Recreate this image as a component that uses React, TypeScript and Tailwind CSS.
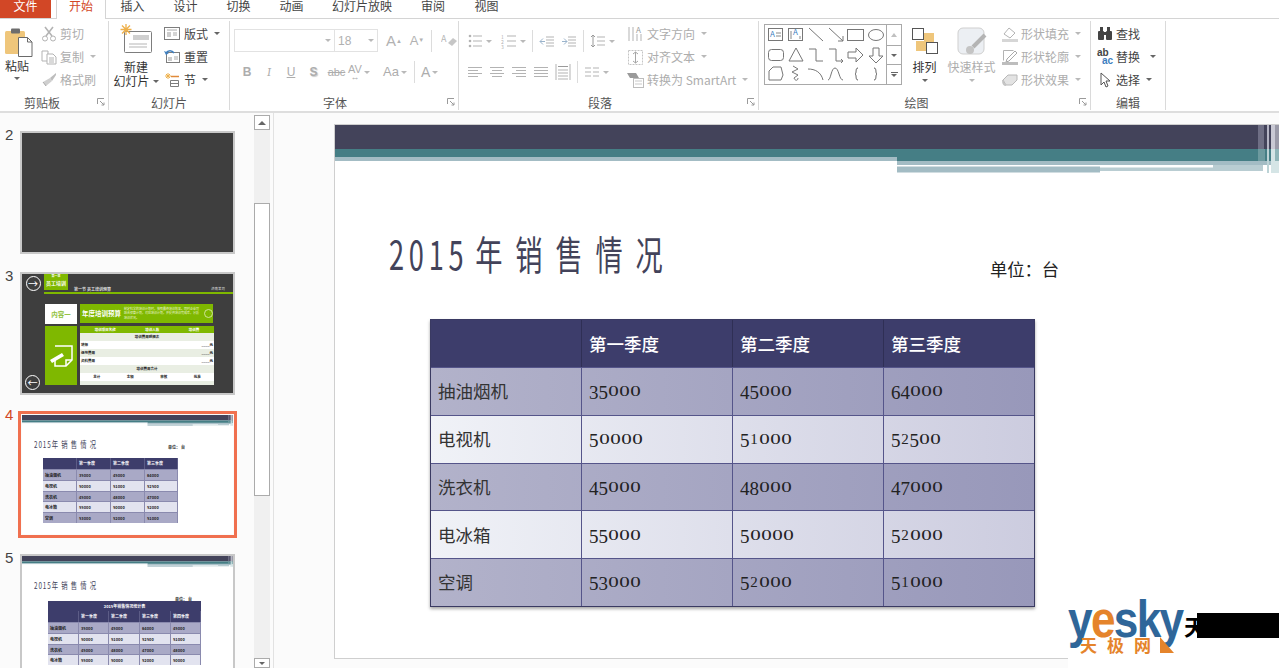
import React from 'react';

const cjk = { fontFamily: '"Noto Sans CJK SC", "Noto Sans", sans-serif' };

const Caret = ({ light = false }: { light?: boolean }) => (
  <span className={`inline-block w-0 h-0 border-x-[3px] border-t-[3px] border-x-transparent ${light ? 'border-t-[#b9b9b9]' : 'border-t-[#666]'}`} />
);

const Ico = ({ w = 16, h = 16, children }: { w?: number; h?: number; children: React.ReactNode }) => (
  <svg width={w} height={h} viewBox={`0 0 ${w} ${h}`} fill="none" strokeWidth="1" className="shrink-0">
    {children}
  </svg>
);

const Tile = ({ x = 0, children }: { x?: number; children?: React.ReactNode }) => (
  <div className="w-[22px] h-[20px] flex items-center justify-center" style={x ? { marginLeft: x } : undefined}>
    {children}
  </div>
);

const Sep = () => <div className="w-px h-[22px] bg-[#dcdcdc] mx-[3px]" />;

const SmallBtn = ({ icon, label, off, caret, className = '' }: { icon: React.ReactNode; label: string; off?: boolean; caret?: boolean; className?: string }) => (
  <div className={`h-[23px] flex items-center gap-[3px] text-[12px] whitespace-nowrap ${off ? 'text-[#adadad]' : 'text-[#444]'} ${className}`}>
    {icon}
    <span>{label}</span>
    {caret && <span className="ml-[3px] flex"><Caret light={off} /></span>}
  </div>
);

const Launcher = () => (
  <svg width="8" height="8" viewBox="0 0 8 8" className="absolute right-[3px] bottom-[4px]" fill="none" stroke="#9a9a9a">
    <path d="M0.5 6V0.5H7" />
    <path d="M3 3L7 7M7 4.5V7H4.5" />
  </svg>
);

const Group = ({ w, label, launcher, labelClass = '', children }: { w: number; label: string; launcher?: boolean; labelClass?: string; children: React.ReactNode }) => (
  <div className="relative h-[89px] mt-[2px] flex flex-col border-r border-[#dadada] shrink-0" style={{ width: w }}>
    <div className="flex-1 flex min-h-0">{children}</div>
    <div className={`h-[14px] leading-[14px] text-center text-[12px] text-[#555] ${labelClass}`}>{label}</div>
    {launcher && <Launcher />}
  </div>
);

const tabs = [
  ['插入', 'w-[53px]'],
  ['设计', 'w-[53px]'],
  ['切换', 'w-[53px]'],
  ['动画', 'w-[53px]'],
  ['幻灯片放映', 'w-[88px]'],
  ['审阅', 'w-[54px]'],
  ['视图', 'w-[53px]'],
];

function TabBar() {
  return (
    <div className="h-[19px] flex border-b border-[#d4d4d4] text-[12px] leading-[11px]">
      <div className="w-[51px] h-[18px] bg-[#d24726] text-white text-center overflow-hidden">文件</div>
      <div className="ml-[5px] w-[50px] h-[19px] bg-white border-x border-[#d4d4d4] text-[#d24726] text-center">开始</div>
      {tabs.map(([t, c]) => (
        <div key={t} className={`${c} text-[#444] text-center`}>{t}</div>
      ))}
    </div>
  );
}

function Clipboard() {
  return (
    <Group w={109} label="剪贴板" launcher labelClass="pr-[24px]">
      <div className="w-[38px] pl-[5px] pt-[7px] flex flex-col items-start">
        <Ico w={29} h={29}>
          <rect x="0" y="3" width="20" height="23" rx="1.5" fill="#efc67b" />
          <rect x="6" y="0.5" width="9" height="5" rx="1" fill="#6d6d6d" />
          <path d="M13.5 9.5h9l4.5 4.5v14.5h-13.5z" fill="#fff" stroke="#6a6a6a" />
          <path d="M22.5 9.5v4.5h4.5" stroke="#6a6a6a" />
        </Ico>
        <div className="mt-[1px] text-[12px] leading-[16px] text-[#333]">粘贴</div>
        <div className="mt-[3px] ml-[9px] flex"><Caret /></div>
      </div>
      <div className="pl-[3px] pt-[1px]">
        <SmallBtn off label="剪切" icon={<Ico><g stroke="#b3b3b3"><path d="M4 1l7 9M12 1l-7 9" strokeWidth="1.6" /><circle cx="4" cy="12.5" r="2.5" /><circle cx="12" cy="12.5" r="2.5" /></g></Ico>} />
        <SmallBtn off caret label="复制" icon={<Ico><g stroke="#b3b3b3"><path d="M1 2h6v10H1z" /><path d="M6 5h6l3 3v7H6z" fill="#fff" /><path d="M8 9h5M8 11h5M8 13h5" /></g></Ico>} />
        <SmallBtn off label="格式刷" icon={<Ico><path d="M15 1l-6 5 2 3 4-6z" fill="#bdbdbd" /><path d="M9 6l-7 4 3 4 6-5z" fill="#cfcfcf" /><path d="M2 10l3 4" stroke="#aaa" /></Ico>} />
      </div>
    </Group>
  );
}

function Slides() {
  return (
    <Group w={121} label="幻灯片">
      <div className="w-[54px] flex flex-col items-center pt-[3px]">
        <div className="ml-[3px] self-start pl-[8px]">
          <Ico w={34} h={30}>
            <rect x="4.5" y="7.5" width="27" height="21" rx="1" fill="#fff" stroke="#7d7d7d" />
            <rect x="13" y="11" width="16" height="5" fill="#cfcfcf" />
            <path d="M9 20h18M9 23h18" stroke="#b5b5b5" />
            <g stroke="#eeb04a" strokeWidth="1.3"><path d="M6 0v11M0.5 5.5h11M2 1.5l8 8M10 1.5l-8 8" /></g>
          </Ico>
        </div>
        <div className="mt-[6px] text-[12px] leading-[14px] text-[#333] text-center whitespace-nowrap">
          新建
          <div className="flex items-center gap-[3px]">幻灯片<Caret /></div>
        </div>
      </div>
      <div className="ml-[1px] pt-[1px]">
        <SmallBtn caret label="版式" icon={<Ico w={17}><rect x="0.5" y="1.5" width="15" height="12" fill="#fff" stroke="#7d7d7d" /><path d="M3 4h10" stroke="#aaa" /><rect x="3" y="6" width="4" height="5" fill="#ccc" /><path d="M9 7h4M9 9h4" stroke="#aaa" /></Ico>} />
        <SmallBtn label="重置" icon={<Ico w={17}><rect x="2.5" y="3.5" width="13" height="10" fill="#fff" stroke="#7d7d7d" /><rect x="4" y="8" width="4" height="4" fill="#ccc" /><path d="M10 8h4M10 10h4" stroke="#aaa" /><path d="M2 4c2-3 6-3 8 0" stroke="#3f7fbf" strokeWidth="1.6" /><path d="M0 2l2 4 3-2z" fill="#3f7fbf" /></Ico>} />
        <SmallBtn caret label="节" icon={<Ico w={17}><g stroke="#eeb04a"><path d="M4 1v6M1 4h6M2 2l4 4M6 2l-4 4" /></g><path d="M7 4.5h8" stroke="#e08a3a" strokeWidth="1.5" /><path d="M6.5 8.5h8v6h-8z" stroke="#7d7d7d" /><path d="M6.5 11.5h8" stroke="#7d7d7d" /></Ico>} />
      </div>
    </Group>
  );
}

function FontGroup() {
  return (
    <Group w={229} label="字体" launcher labelClass="pr-[18px]">
      <div className="pl-[4px] pt-[8px]">
        <div className="flex items-center h-[23px]">
          <div className="w-[101px] h-[23px] border border-[#e2e2e2] flex items-center justify-end pr-[3px]"><Caret light /></div>
          <div className="w-[43px] h-[23px] border border-l-0 border-[#e2e2e2] flex items-center justify-between pl-[3px] pr-[3px] text-[12px] text-[#b0b0b0]" style={{ fontFamily: '"Liberation Sans", sans-serif' }}>18<Caret light /></div>
          <div className="ml-[5px] flex items-end gap-[1px] text-[#b2b2b2]" style={{ fontFamily: '"Liberation Sans", sans-serif' }}>
            <span className="w-[22px] text-center text-[15px] leading-[18px]">A<sup className="text-[6px]">▲</sup></span>
            <span className="w-[22px] text-center text-[13px] leading-[18px]">A<sup className="text-[6px]">▼</sup></span>
          </div>
          <div className="w-px h-[22px] bg-[#dcdcdc] mx-[3px]" />
          <Tile x={3}><Ico w={16} h={16}><text x="0" y="9" fontSize="9" fill="#b5b5b5">A</text><path d="M7 10l5-5 4 3-5 5z" fill="#c6c6c6" /></Ico></Tile>
        </div>
        <div className="flex items-center h-[22px] mt-[9px] pl-[2px] text-[#adadad] text-[12px]" style={{ fontFamily: '"Liberation Sans", sans-serif' }}>
          <span className="w-[22px] text-center font-bold">B</span>
          <span className="w-[22px] text-center italic font-serif">I</span>
          <span className="w-[22px] text-center underline">U</span>
          <span className="w-[23px] text-center font-bold [text-shadow:1px_1px_1px_#ccc]">S</span>
          <span className="w-[23px] text-center line-through text-[11px]">abc</span>
          <span className="w-[32px] flex items-center gap-[2px]"><span className="flex flex-col items-center text-[11px] leading-[9px]">AV<span className="text-[9px] leading-[6px]">↔</span></span><Caret light /></span>
          <span className="w-[28px] ml-[3px] flex items-center gap-[2px] text-[13px]">Aa<Caret light /></span>
          <Sep />
          <span className="w-[24px] ml-[3px] flex items-center gap-[2px] text-[14px]">A<Caret light /></span>
        </div>
      </div>
    </Group>
  );
}

const Lines = ({ kind }: { kind: 'l' | 'c' | 'r' | 'j' }) => {
  const rows = [0, 1, 2, 3].map((i) => {
    const short = i % 2 === 1;
    if (!short || kind === 'j') return [1, 15];
    if (kind === 'l') return [1, 11];
    if (kind === 'c') return [3, 13];
    return [5, 15];
  });
  return (
    <Ico>
      {rows.map(([a, b], i) => (
        <path key={i} d={`M${a} ${3.5 + i * 3}H${b}`} stroke="#b3b3b3" />
      ))}
    </Ico>
  );
};

function Paragraph() {
  return (
    <Group w={300} label="段落" launcher labelClass="pr-[17px]">
      <div className="pl-[5px] pt-[9px] w-[168px]">
        <div className="flex items-center h-[22px]">
          <Tile><Ico><g fill="#b3b3b3"><circle cx="3" cy="3" r="1.3" /><circle cx="3" cy="8" r="1.3" /><circle cx="3" cy="13" r="1.3" /></g><path d="M6 3h9M6 8h9M6 13h9" stroke="#b3b3b3" /></Ico></Tile>
          <span className="w-[12px] flex"><Caret light /></span>
          <Tile><Ico><text x="0" y="5.5" fontSize="5" fill="#b3b3b3">1</text><text x="0" y="10.5" fontSize="5" fill="#b3b3b3">2</text><text x="0" y="15.5" fontSize="5" fill="#b3b3b3">3</text><path d="M6 3h9M6 8h9M6 13h9" stroke="#b3b3b3" /></Ico></Tile>
          <span className="w-[9px] flex"><Caret light /></span>
          <Sep />
          <Tile><Ico><path d="M7 4h8M7 7h8M7 10h8M7 13h8" stroke="#b3b3b3" /><path d="M1 8.5h5M1 8.5l3-3M1 8.5l3 3" stroke="#9bb4cc" /></Ico></Tile>
          <Tile><Ico><path d="M7 4h8M7 7h8M7 10h8M7 13h8" stroke="#b3b3b3" /><path d="M1 8.5h5M6 8.5l-3-3M6 8.5l-3 3" stroke="#9bb4cc" /></Ico></Tile>
          <Sep />
          <Tile><Ico><path d="M7 4h8M7 8h8M7 12h8" stroke="#b3b3b3" /><path d="M3 2v12M1 4l2-2 2 2M1 12l2 2 2-2" stroke="#9a9a9a" /></Ico></Tile>
          <Caret light />
        </div>
        <div className="flex items-center h-[22px] mt-[9px]">
          <Tile><Lines kind="l" /></Tile>
          <Tile><Lines kind="c" /></Tile>
          <Tile><Lines kind="r" /></Tile>
          <Tile><Lines kind="j" /></Tile>
          <Tile><Ico h={18}><path d="M1 1v16M15 1v16M3 7h10M3 10h10M3 13h10M3 16h10" stroke="#b3b3b3" /><path d="M3 3.5h10" stroke="#9a9a9a" /></Ico></Tile>
          <Sep />
          <Tile><Ico><path d="M1 4h6M1 8h6M1 12h6M9 4h6M9 8h6M9 12h6" stroke="#b3b3b3" /></Ico></Tile>
          <Caret light />
        </div>
      </div>
      <div className="pt-[1px]">
        <SmallBtn off caret label="文字方向" icon={<Ico w={17}><path d="M2 1v14M6 1v14M10 8v7M14 8v7" stroke="#b3b3b3" /><text x="9" y="7" fontSize="8" fill="#9a9a9a">A</text></Ico>} />
        <SmallBtn off caret label="对齐文本" icon={<Ico w={17}><rect x="1.5" y="1.5" width="14" height="14" stroke="#c4c4c4" strokeDasharray="2 1" /><path d="M8.5 3v11M6 5l2.5-2 2.5 2M6 12l2.5 2 2.5-2" stroke="#a5a5a5" /></Ico>} />
        <SmallBtn off caret label="转换为 SmartArt" icon={<Ico w={17}><path d="M0 1h9l3 5H3z" fill="#9a9a9a" /><rect x="6.5" y="6.5" width="10" height="9" fill="#fff" stroke="#bdbdbd" /><path d="M8 9h7M8 12h7" stroke="#c9c9c9" /></Ico>} />
      </div>
    </Group>
  );
}

const shapes = [
  <g key="a"><rect x="2.5" y="3.5" width="14" height="12" stroke="#777" /><text x="4" y="12" fontSize="8" fill="#3f7fbf">A</text><path d="M10 8h5M10 11h5" stroke="#888" /></g>,
  <g key="b"><rect x="2.5" y="3.5" width="14" height="12" stroke="#777" /><text x="7" y="10" fontSize="8" fill="#3f7fbf">A</text><path d="M5 6v8M14 11v3" stroke="#888" /></g>,
  <path key="c" d="M3 3l14 13" stroke="#777" />,
  <path key="d" d="M3 3l14 13M17 11v5h-5" stroke="#777" />,
  <rect key="e" x="1.5" y="4.5" width="16" height="11" stroke="#777" />,
  <ellipse key="f" cx="10" cy="10" rx="7.5" ry="5.5" stroke="#777" />,
  <rect key="g" x="2.5" y="4.5" width="15" height="11" rx="3" stroke="#777" />,
  <path key="h" d="M10 3l7 13H3z" stroke="#777" />,
  <path key="i" d="M3 4h7v12h7" stroke="#777" />,
  <path key="j" d="M3 4h7v12h7M15 14l2 2-2 2" stroke="#777" />,
  <path key="k" d="M2 7h8V3l7 7-7 7v-4H2z" stroke="#777" />,
  <path key="l" d="M7 3h6v8h4l-7 7-7-7h4z" stroke="#777" />,
  <path key="m" d="M3 7l4-4h8l2 8-2 5H3z" stroke="#777" />,
  <path key="n" d="M7 2l5 3-6 3 6 3-4 3c1 3 4 3 4 0" stroke="#777" />,
  <path key="o" d="M2 5c7 0 13 3 15 11" stroke="#777" />,
  <path key="p" d="M2 16c3 0 3-12 7-12s4 12 8 12" stroke="#777" />,
  <path key="q" d="M12 4c-3 0-1 5-3 6 2 1 0 6 3 6" stroke="#555" />,
  <path key="r" d="M8 4c3 0 1 5 3 6-2 1 0 6-3 6" stroke="#555" />,
];

function Drawing() {
  return (
    <Group w={332} label="绘图" launcher labelClass="pr-[16px]">
      <div className="ml-[5px] mt-[3px] w-[138px] h-[61px] border border-[#a9a9a9] flex">
        <div className="flex-1 grid grid-cols-6 grid-rows-3 pl-[1px]">
          {shapes.map((s, i) => (
            <svg key={i} width="20" height="20" viewBox="0 0 20 20" fill="none">{s}</svg>
          ))}
        </div>
        <div className="w-[15px] border-l border-[#a9a9a9] flex flex-col text-center">
          <div className="h-[20px] flex items-center justify-center"><span className="w-0 h-0 border-x-[3px] border-b-[4px] border-x-transparent border-b-[#c0c0c0]" /></div>
          <div className="h-[20px] border-y border-[#a9a9a9] flex items-center justify-center"><Caret /></div>
          <div className="flex-1 flex flex-col items-center justify-center gap-[1px]"><span className="w-[7px] h-px bg-[#666]" /><Caret /></div>
        </div>
      </div>
      <div className="ml-[3px] w-[39px] flex flex-col items-center pt-[6px]">
        <Ico w={28} h={28}>
          <rect x="13" y="6" width="10" height="10" fill="#efc67b" />
          <rect x="5" y="14" width="10" height="10" fill="#efc67b" />
          <rect x="1.5" y="1.5" width="11" height="11" fill="none" stroke="#555" />
          <rect x="15.5" y="15.5" width="11" height="11" fill="none" stroke="#555" />
        </Ico>
        <div className="mt-[5px] text-[12px] leading-[14px] text-[#333]">排列</div>
        <div className="mt-[5px] flex"><Caret /></div>
      </div>
      <div className="w-[55px] flex flex-col items-center pt-[6px]">
        <Ico w={30} h={29}>
          <rect x="1" y="1" width="26" height="26" rx="5" fill="#eceff3" stroke="#cfcfcf" />
          <path d="M28 8L16 20" stroke="#b4b4b4" strokeWidth="4" />
          <circle cx="13" cy="23" r="4" fill="#c4c4c4" />
        </Ico>
        <div className="mt-[4px] text-[12px] leading-[14px] text-[#adadad] whitespace-nowrap">快速样式</div>
        <div className="mt-[5px] flex"><Caret light /></div>
      </div>
      <div className="ml-[3px] pt-[1px]">
        <SmallBtn off caret label="形状填充" icon={<Ico w={16}><path d="M2 8l5-6 6 5-5 5z" stroke="#b3b3b3" /><path d="M0 13h16v3H0z" fill="#d6d6d6" /></Ico>} />
        <SmallBtn off caret label="形状轮廓" icon={<Ico w={16}><path d="M1.5 1.5h10M1.5 1.5v10" stroke="#b3b3b3" /><path d="M5 10l8-8 2 2-8 8-3 1z" stroke="#a9a9a9" /><path d="M0 13h16v3H0z" fill="#bdbdbd" /></Ico>} />
        <SmallBtn off caret label="形状效果" icon={<Ico w={16}><path d="M1 8l5-5h9v5l-5 5H4z" fill="#e3e3e3" stroke="#b8b8b8" /><path d="M1 8c0 4 2 5 3 5" stroke="#c4c4c4" strokeWidth="2" /></Ico>} />
      </div>
    </Group>
  );
}

function Editing() {
  return (
    <Group w={75} label="编辑">
      <div className="pl-[6px] pt-[1px]">
        <SmallBtn label="查找" icon={<Ico><g fill="#444"><rect x="1" y="5" width="6" height="9" rx="1" /><rect x="9" y="5" width="6" height="9" rx="1" /><rect x="3" y="1" width="3" height="5" /><rect x="10" y="1" width="3" height="5" /><rect x="7" y="6" width="2" height="3" /></g></Ico>} />
        <div className="flex items-center">
          <SmallBtn label="替换" icon={
            <span className="w-[16px] text-[10px] leading-[8px] font-bold" style={{ fontFamily: '"Liberation Sans", sans-serif' }}>
              <span className="block text-[#444]">ab</span>
              <span className="block text-[#3f7fbf] text-right">ac</span>
            </span>
          } />
          <span className="ml-[10px] flex"><Caret /></span>
        </div>
        <SmallBtn caret label="选择" icon={<Ico><path d="M4 1v12l3-3 2 5 2-1-2-5h4z" fill="#fff" stroke="#555" /></Ico>} />
      </div>
    </Group>
  );
}

function Ribbon() {
  return (
    <div className="h-[94px] flex border-b-2 border-[#dedede] bg-white" style={cjk}>
      <Clipboard />
      <Slides />
      <FontGroup />
      <Paragraph />
      <Drawing />
      <Editing />
    </div>
  );
}

// the band across the top of the slide, also used at thumbnail size
const SlideBand = ({ className }: { className: string }) => (
  <svg viewBox="0 0 945 49" preserveAspectRatio="none" className={`block ${className}`}>
    <rect width="945" height="24" fill="#43435a" />
    <rect y="24" width="945" height="8" fill="#457e85" />
    <rect y="32" width="562" height="4" fill="#a3bcc4" />
    <rect x="562" y="32" width="383" height="4" fill="#457e85" />
    <rect x="562" y="36" width="383" height="4" fill="#a3bcc4" />
    <rect x="562" y="41" width="316" height="1.5" fill="#ffffff" />
    <rect x="878" y="40" width="50" height="6" fill="#b9cdd2" />
    <rect x="562" y="41.5" width="203" height="6" fill="#a3bcc4" />
    <rect x="765" y="42.5" width="113" height="3.5" fill="#b9cdd2" />
    <rect x="923" width="6" height="24" fill="#6f6f85" />
    <rect x="932" width="2" height="24" fill="#b5b5c5" />
    <rect x="936" width="4" height="24" fill="#c9c9d4" />
    <rect x="940" width="5" height="24" fill="#9a9aa8" />
    <rect x="923" y="24" width="7" height="12" fill="#6d9a9f" />
    <rect x="932" y="24" width="2" height="24" fill="#bcd3d6" />
    <rect x="936" y="24" width="4" height="24" fill="#d5e5e6" />
    <rect x="940" y="24" width="5" height="12" fill="#8fb5b8" />
    <rect x="940" y="36" width="5" height="12" fill="#d5e5e6" />
  </svg>
);

const rows = [
  ['抽油烟机', '35000', '45000', '64000'],
  ['电视机', '50000', '51000', '52500'],
  ['洗衣机', '45000', '48000', '47000'],
  ['电冰箱', '55000', '50000', '52000'],
  ['空调', '53000', '52000', '51000'],
];

// the reference uses old-style figures, no installed font has them
const Digit = ({ d }: { d: string }) => {
  if (d === '0') return <span className="inline-block w-[11px] text-center text-[15px] scale-x-[1.4]">0</span>;
  if (d === '1' || d === '2') return <span className="inline-block w-[9px] text-center text-[15px]">{d}</span>;
  return <span className="inline-block w-[9.5px] text-center text-[19px] relative top-[2px]">{d}</span>;
};

function SalesTable() {
  return (
    <div className="ml-[95px] w-[605px] shadow-[0_2px_3px_rgba(0,0,0,0.35)] border border-[#3a3a62]" style={cjk}>
      <div className="grid grid-cols-[151px_151px_151px_150px] h-[47px] bg-[#3d3d6b] text-white text-[17.5px] font-medium leading-[47px]">
        {['', '第一季度', '第二季度', '第三季度'].map((h, i) => (
          <div key={i} className="pl-[7px] border-r border-[#2f2f55] last:border-r-0">{h}</div>
        ))}
      </div>
      {rows.map((r, i) => (
        <div key={r[0]} className={`grid grid-cols-[151px_151px_151px_150px] h-[47.8px] border-t border-[#55558a] bg-linear-to-r ${i % 2 === 0 ? 'from-[#b2b2ca] to-[#9898ba]' : 'from-[#f0f2f7] to-[#ccccdf]'}`}>
          {r.map((c, j) => (
            <div key={j} className={`pl-[7px] flex items-center border-r border-[#55558a] last:border-r-0 text-[#333] ${j === 0 ? 'text-[17.5px]' : ''}`}>
              {j === 0 ? c : (
                <span className="flex items-center h-[20px] text-[#222]" style={{ fontFamily: '"Liberation Serif", serif' }}>
                  {c.split('').map((d, k) => <Digit key={k} d={d} />)}
                </span>
              )}
            </div>
          ))}
        </div>
      ))}
    </div>
  );
}

function MainSlide() {
  return (
    <div className="flex-1 min-w-0 bg-[#fbfbfb] pl-[60px] pt-[11px] border-l border-[#e2e2e2]">
      <div className="w-[960px] h-[535px] bg-white border border-[#cfcfcf] border-r-0">
        <SlideBand className="w-[945px] h-[49px]" />
        <div className="h-[145px] flex items-start">
          <div className="ml-[54px] mt-[54px] w-[602px] origin-left scale-x-[0.68] whitespace-nowrap text-[40px] leading-[50px] text-[#43435a] tracking-[5px]" style={cjk}>
            <span className="tracking-[7px] mr-[10px]">2015</span>年 销 售 情 况
          </div>
          <div className="-ml-[1px] mt-[84px] text-[#222] text-[17.3px] leading-[22px] whitespace-nowrap" style={cjk}>单位：台</div>
        </div>
        <SalesTable />
      </div>
    </div>
  );
}

function MiniTable({ five }: { five?: boolean }) {
  const cols = five ? ['', '第一季度', '第二季度', '第三季度', '第四季度'] : ['', '第一季度', '第二季度', '第三季度'];
  const tpl = five ? 'grid-cols-[31px_30px_31px_31px_30px]' : 'grid-cols-[34px_34px_34px_33px]';
  const data = five ? rows.slice(0, 4) : rows;
  return (
    <div className={`${five ? 'ml-[26px] w-[153px]' : 'ml-[21px] w-[135px]'} text-[4px] font-bold`} style={cjk}>
      {five && <div className="h-[10px] bg-[#3d3d6b] text-white text-center leading-[10px]">2015年销售情况统计表</div>}
      <div className={`grid ${tpl} h-[11px] bg-[#3d3d6b] text-white leading-[11px]`}>
        {cols.map((c, i) => <div key={i} className="pl-[2px] border-r border-[#5c5c86]">{c}</div>)}
      </div>
      {data.map((r, i) => (
        <div key={r[0]} className={`grid ${tpl} h-[10.8px] leading-[10px] text-[#222] border-t border-[#8a8aae] ${i % 2 === 0 ? 'bg-[#a9a9c6]' : 'bg-[#e2e3ef]'}`}>
          {(five ? [...r, r[2]] : r).map((c, j) => <div key={j} className="pl-[2px] border-r border-[#8a8aae]">{c}</div>)}
        </div>
      ))}
    </div>
  );
}

function SalesThumb({ five }: { five?: boolean }) {
  return (
    <div className="w-[211px] h-[119px] bg-white overflow-hidden">
      <SlideBand className="w-[211px] h-[11px]" />
      <div className={`${five ? 'h-[34px]' : 'h-[32px]'} flex items-start`} style={cjk}>
        <div className="ml-[12px] mt-[13px] w-[134px] origin-left scale-x-[0.7] text-[9px] leading-[12px] text-[#43435a] tracking-[1.3px] whitespace-nowrap">2015年 销 售 情 况</div>
        <div className={`${five ? 'mt-[29px] ml-[7px]' : 'mt-[18px]'} text-[4px] text-[#333] font-bold leading-[6px]`}>单位： 台</div>
      </div>
      <MiniTable five={five} />
    </div>
  );
}

function GreenThumb() {
  return (
    <div className="w-[211px] h-[119px] bg-[#3e3e3e] overflow-hidden relative text-white" style={cjk}>
      <div className="h-[18px] flex items-end">
        <div className="w-[22px] h-[17px] flex items-center justify-center">
          <span className="w-[15px] h-[15px] rounded-full border border-white flex items-center justify-center text-[10px] leading-none">→</span>
        </div>
        <div className="w-[24px] h-[16px] bg-[#7fb800] text-[5px] font-bold text-center leading-[8px] self-start">
          <div className="text-[3px] leading-[5px]">第一章</div>员工培训
        </div>
        <div className="ml-[6px] text-[4px] leading-[6px] text-[#ddd] font-bold">第一节 员工培训预算</div>
        <div className="ml-auto mr-[8px] text-[3.5px] leading-[6px] text-[#ddd]">济南某司</div>
      </div>
      <div className="ml-[22px] h-[2px] bg-[#7fb800]" />
      <div className="mt-[10px] ml-[23px] flex gap-[3px]">
        <div className="w-[32px] h-[20px] bg-white text-[#8fbf3a] text-[6.5px] text-center leading-[20px] font-bold">内容一</div>
        <div className="w-[133px] h-[19px] bg-[#7fb800] flex items-center pl-[2px] gap-[3px]">
          <span className="text-[6.5px] font-bold whitespace-nowrap">年度培训预算</span>
          <span className="text-[3px] leading-[4.5px] w-[79px] text-[#eef6d8]">制定科学的培训计划时，按照最终培训效果。同时企业可结合预算计划，对应培训计划，并提供培训完成率，分析培训状况。</span>
          <span className="w-[9px] h-[9px] rounded-full border border-[#cfe49a]" />
        </div>
      </div>
      <div className="mt-[2px] ml-[23px] flex gap-[3px]">
        <div className="w-[32px] h-[59px] bg-[#7fb800] flex items-center justify-center">
          <svg width="23" height="22" viewBox="0 0 23 22" fill="none" stroke="#fff" strokeWidth="1.5">
            <path d="M5 1h17v14l-6 6H5v-6" />
            <path d="M16 21v-6h6" />
            <path d="M0 15L12 8l2 3L2 18z" fill="#fff" stroke="none" />
          </svg>
        </div>
        <div className="w-[134px] h-[59px] bg-[#e9eee3] text-[#222] text-[3.5px] font-bold leading-[8px]">
          <div className="h-[7px] bg-[#7fb800] text-white flex justify-around leading-[7px]"><span>培训项目名称</span><span>培训人数</span><span>培训费</span></div>
          <div className="text-center">培训费用明细表</div>
          <div className="bg-white h-[8px] pl-[1px] flex justify-between pr-[1px]"><span>讲师</span><span>____元</span></div>
          <div className="h-[8px] pl-[1px] flex justify-between pr-[1px]"><span>场地费用</span><span>____元</span></div>
          <div className="bg-white h-[8px] pl-[1px] flex justify-between pr-[1px]"><span>资料费用</span><span>____元</span></div>
          <div className="text-center">培训费用合计</div>
          <div className="bg-white flex justify-around"><span>总计</span><span>金额</span><span>审核</span><span>批准</span></div>
        </div>
      </div>
      <span className="absolute left-[3px] bottom-[3px] w-[15px] h-[15px] rounded-full border border-white flex items-center justify-center text-[10px] leading-none">←</span>
    </div>
  );
}

function ThumbRow({ n, active, children }: { n: number; active?: boolean; children: React.ReactNode }) {
  return (
    <div className="flex items-start">
      <div className={`w-[18px] pl-[5px] -mt-[5px] text-[15px] leading-[18px] ${active ? 'text-[#d24726]' : 'text-[#444]'}`} style={{ fontFamily: '"Liberation Sans", sans-serif' }}>{n}</div>
      <div className={active ? 'border-[3px] border-[#f0704f] p-px' : 'ml-[2px] border-2 border-[#c8c8c8]'}>
        {children}
      </div>
    </div>
  );
}

function SlidePanel() {
  return (
    <div className="w-[273px] shrink-0 flex bg-[#fbfbfb]">
      <div className="w-[254px] pt-[18px] flex flex-col">
        <ThumbRow n={2}><div className="w-[211px] h-[119px] bg-[#3e3e3e]" /></ThumbRow>
        <div className="mt-[18px]"><ThumbRow n={3}><GreenThumb /></ThumbRow></div>
        <div className="mt-[16px]"><ThumbRow n={4} active><SalesThumb /></ThumbRow></div>
        <div className="mt-[16px]"><ThumbRow n={5}><SalesThumb five /></ThumbRow></div>
      </div>
      <div className="w-[16px] h-[553px] mt-[2px] bg-[#f0f0f0] flex flex-col">
        <div className="h-[15px] border border-[#ababab] bg-white flex items-center justify-center"><span className="w-0 h-0 border-x-[4px] border-b-[4px] border-x-transparent border-b-[#666]" /></div>
        <div className="mt-[73px] h-[293px] border border-[#ababab] bg-white" />
        <div className="flex-1" />
        <div className="h-[10px] border border-[#ababab] bg-white flex items-center justify-center"><Caret /></div>
      </div>
    </div>
  );
}

function Watermark() {
  return (
    <div className="absolute left-[1068px] top-[590px] w-[211px] h-[78px] bg-white" style={{ fontFamily: '"Liberation Sans", sans-serif' }}>
      <div className="h-[64px] flex">
        <div className="w-[116px] relative">
          <div className="absolute left-0 top-[8px] text-[52px] leading-[42px] font-bold text-[#2f6699] tracking-[-2px] scale-x-[0.85] origin-left whitespace-nowrap">y<span className="text-[#e5842b]">e</span>sky</div>
          <div className="absolute left-[12px] top-[46px] w-[100px] h-[18px] text-[17px] leading-[18px] font-bold text-[#e5842b] tracking-[10px] whitespace-nowrap" style={cjk}>天极网</div>
          <svg width="14" height="16" viewBox="0 0 14 16" className="absolute left-[92px] top-[47px]"><path d="M0 0L14 16H0z" fill="#e5842b" /></svg>
        </div>
        <div className="mt-[23px] flex-1 h-[25px] flex">
          <div className="w-[13px] text-black text-[22px] leading-[25px] font-bold whitespace-nowrap" style={cjk}>天</div>
          <div className="flex-1 bg-black" />
        </div>
      </div>
    </div>
  );
}

export default function App() {
  return (
    <div className="relative w-[1279px] h-[668px] overflow-hidden bg-white" style={cjk}>
      <TabBar />
      <Ribbon />
      <div className="flex h-[555px]">
        <SlidePanel />
        <MainSlide />
      </div>
      <Watermark />
    </div>
  );
}
